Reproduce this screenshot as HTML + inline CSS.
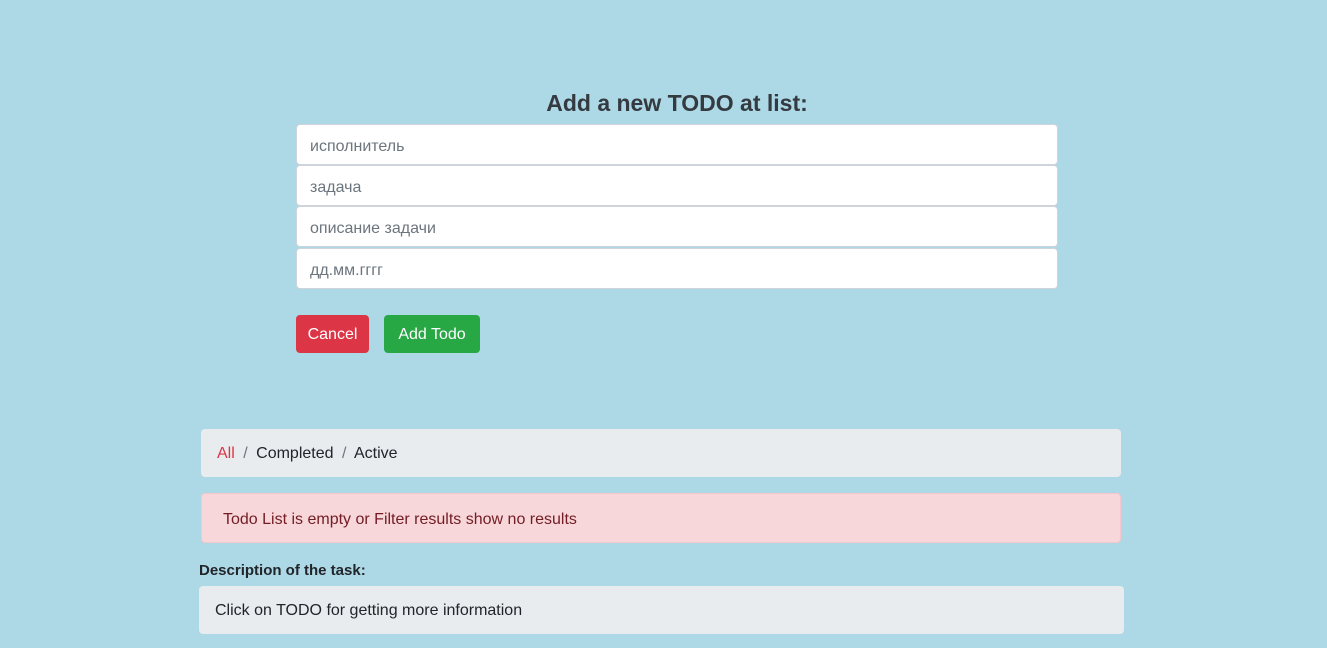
<!DOCTYPE html>
<html><head><meta charset="utf-8"><style>
*{box-sizing:border-box;margin:0;padding:0}
body{width:1327px;height:648px;background:#add8e6;font-family:"Liberation Sans",sans-serif;color:#212529;position:relative;overflow:hidden}
.abs{position:absolute}
h2{position:absolute;left:0;width:1354px;text-align:center;top:90px;font-size:23px;font-weight:bold;color:#343a40}
.inp{position:absolute;left:296px;width:762px;height:41px;background:#fff;border:1px solid #ced4da;border-radius:4px;padding:2px 13px 0;font-size:16px;color:#6c757d;line-height:39px}
.btn{position:absolute;top:315px;height:38px;border-radius:4px;color:#fff;font-size:16px;line-height:40px;text-align:center}
.box{position:absolute;border-radius:4px;font-size:16px}
</style></head><body>
<h2>Add a new TODO at list:</h2>
<div class="inp" style="top:124px">исполнитель</div>
<div class="inp" style="top:165px">задача</div>
<div class="inp" style="top:206px">описание задачи</div>
<div class="inp" style="top:248px">дд.мм.гггг</div>
<div class="btn" style="left:296px;width:73px;background:#dc3545">Cancel</div>
<div class="btn" style="left:384px;width:96px;background:#28a745">Add Todo</div>
<div class="box" style="left:201px;top:429px;width:920px;height:48px;background:#e9ecef;padding-left:16px;line-height:50px"><span style="color:#dc3545">All</span> <span style="color:#6c757d;margin:0 4px">/</span> Completed <span style="color:#6c757d;margin:0 4px">/</span> Active</div>
<div class="box" style="left:201px;top:493px;width:920px;height:50px;background:#f8d7da;border:1px solid #f5c6cb;color:#721c24;padding-left:21px;line-height:51px">Todo List is empty or Filter results show no results</div>
<div class="abs" style="left:199px;top:562px;font-size:15px;font-weight:bold;color:#212529">Description of the task:</div>
<div class="box" style="left:199px;top:586px;width:925px;height:48px;background:#e9ecef;padding-left:16px;line-height:50px">Click on TODO for getting more information</div>
</body></html>
